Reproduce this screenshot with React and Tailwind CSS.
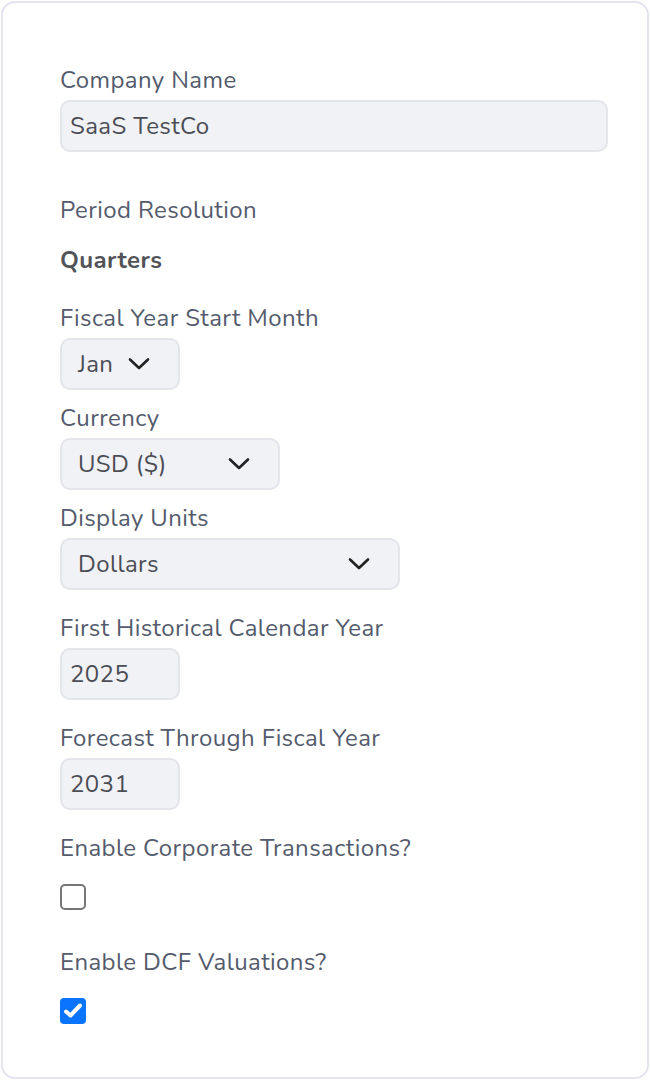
import React, { useState } from "react";

const font = { fontFamily: "Nunito, Lato, 'Noto Sans', sans-serif", letterSpacing: "0.4px" };

const Chevron = () => (
  <svg width="22" height="14" viewBox="0 0 22 14" fill="none" className="shrink-0">
    <path d="M2 2.5 L11 11 L20 2.5" stroke="#222" strokeWidth="2.6" strokeLinecap="round" strokeLinejoin="round" />
  </svg>
);

const Label = ({ children, className = "" }) => (
  <div className={`text-[24px] leading-[28px] text-[#545b6c] ${className}`}>{children}</div>
);

const Select = ({ value, width }) => (
  <div
    className={`mt-[6px] h-[52px] ${width} flex items-center justify-between pl-[16px] pr-[28px] rounded-[10px] border-2 border-[#e3e5ea] bg-[#f1f2f6] text-[24px] text-[#4b4d55]`}
  >
    <span>{value}</span>
    <Chevron />
  </div>
);

const Field = ({ value, width }) => (
  <div
    className={`mt-[6px] h-[52px] ${width} flex items-center pl-[8px] rounded-[10px] border-2 border-[#e3e5ea] bg-[#f1f2f6] text-[24px] text-[#4b4d55]`}
  >
    {value}
  </div>
);

const Checkbox = ({ checked, onClick }) =>
  checked ? (
    <button onClick={onClick} className="w-[26px] h-[26px] rounded-[4px] bg-[#0b74ff] flex items-center justify-center">
      <svg width="20" height="18" viewBox="0 0 20 18" fill="none">
        <path d="M3 9.5 L7.5 13.5 L17 3.5" stroke="white" strokeWidth="4" strokeLinecap="round" strokeLinejoin="round" />
      </svg>
    </button>
  ) : (
    <button onClick={onClick} className="w-[26px] h-[26px] rounded-[5px] border-2 border-[#767676] bg-white" />
  );

export default function App() {
  const [corp, setCorp] = useState(false);
  const [dcf, setDcf] = useState(true);

  return (
    <div className="w-[650px] h-[1080px] bg-white p-[1px]" style={font}>
      <div className="h-full rounded-[14px] border-2 border-[#e4e4ef] bg-white pl-[57px] pr-[40px] pt-[63px]">
        <Label>Company Name</Label>
        <Field value="SaaS TestCo" width="w-[548px]" />

        <Label className="mt-[44px]">Period Resolution</Label>
        <div className="mt-[22px] text-[24px] leading-[28px] font-bold text-[#515359]">Quarters</div>

        <Label className="mt-[30px]">Fiscal Year Start Month</Label>
        <Select value="Jan" width="w-[120px]" />

        <Label className="mt-[14px]">Currency</Label>
        <Select value="USD ($)" width="w-[220px]" />

        <Label className="mt-[14px]">Display Units</Label>
        <Select value="Dollars" width="w-[340px]" />

        <Label className="mt-[24px]">First Historical Calendar Year</Label>
        <Field value="2025" width="w-[120px]" />

        <Label className="mt-[24px]">Forecast Through Fiscal Year</Label>
        <Field value="2031" width="w-[120px]" />

        <Label className="mt-[24px]">Enable Corporate Transactions?</Label>
        <div className="mt-[22px] flex">
          <Checkbox checked={corp} onClick={() => setCorp(!corp)} />
        </div>

        <Label className="mt-[38px]">Enable DCF Valuations?</Label>
        <div className="mt-[22px] flex">
          <Checkbox checked={dcf} onClick={() => setDcf(!dcf)} />
        </div>
      </div>
    </div>
  );
}
